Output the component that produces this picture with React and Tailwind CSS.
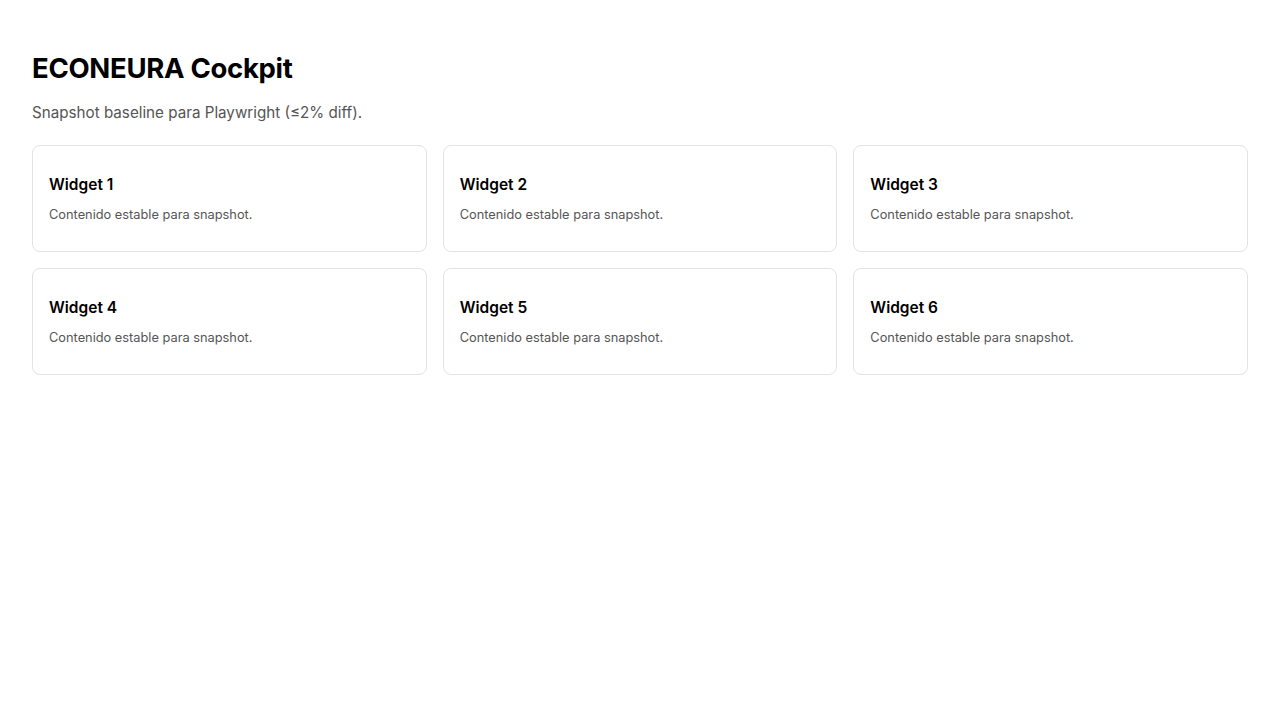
export default function App() {
  const widgets = [1, 2, 3, 4, 5, 6];
  return (
    <div className="min-h-screen bg-white p-8 text-black" style={{ fontFamily: 'Inter, "Noto Sans", sans-serif' }}>
      <h1 className="mt-[18px] text-[27.5px] font-bold leading-[36px] tracking-[-0.3px]">ECONEURA Cockpit</h1>
      <p className="mt-[15px] text-[15.2px] leading-[24px] text-[#555]">Snapshot baseline para Playwright (≤2% diff).</p>
      <div className="mt-[20px] grid grid-cols-3 gap-4">
        {widgets.map(n => (
          <div key={n} className="h-[107px] rounded-lg border border-[#e3e3e3] px-4 pt-[29px]">
            <h3 className="text-[15.5px] font-semibold leading-5">Widget {n}</h3>
            <p className="mt-[12px] text-[12.8px] leading-4 text-[#555]">Contenido estable para snapshot.</p>
          </div>
        ))}
      </div>
    </div>
  );
}
